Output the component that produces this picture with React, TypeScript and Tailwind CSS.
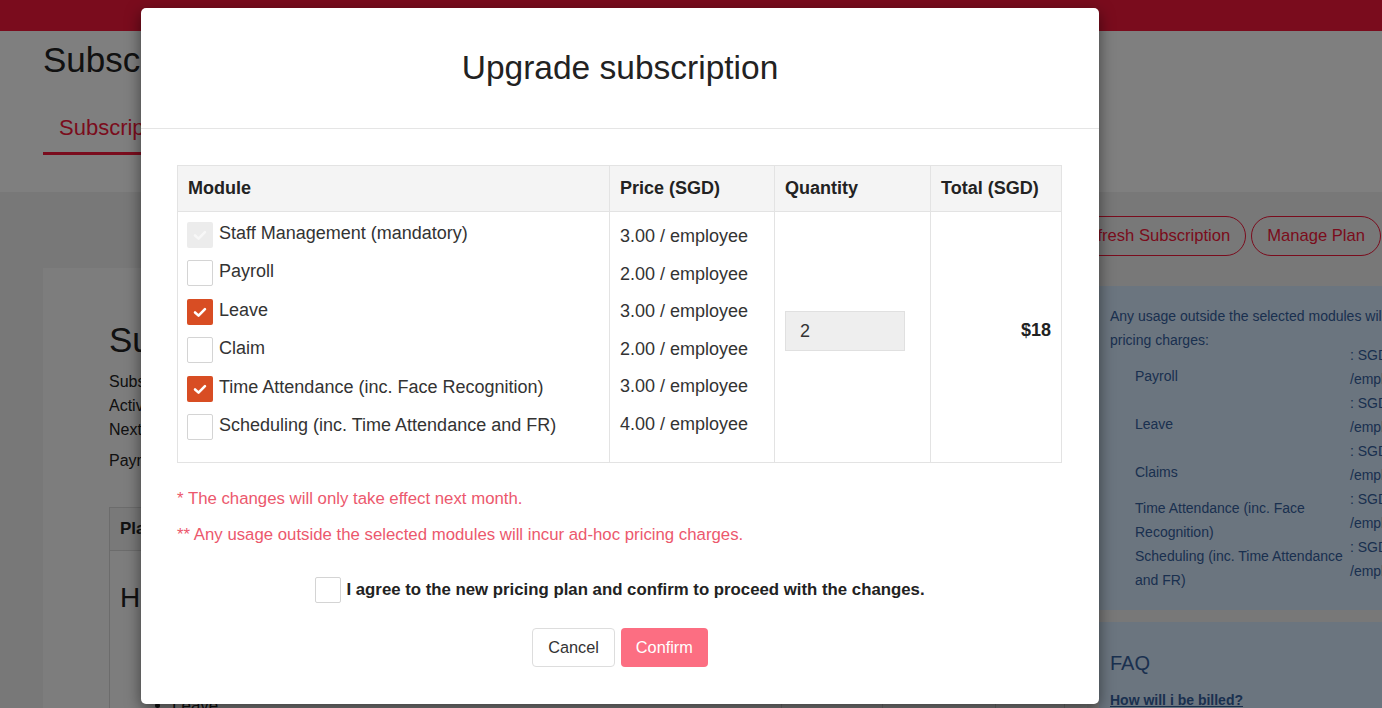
import React from 'react';

type BoxState = 'on' | 'off' | 'disabled';

const modules: { name: string; state: BoxState; price: string }[] = [
  { name: 'Staff Management (mandatory)', state: 'disabled', price: '3.00' },
  { name: 'Payroll', state: 'off', price: '2.00' },
  { name: 'Leave', state: 'on', price: '3.00' },
  { name: 'Claim', state: 'off', price: '2.00' },
  { name: 'Time Attendance (inc. Face Recognition)', state: 'on', price: '3.00' },
  { name: 'Scheduling (inc. Time Attendance and FR)', state: 'off', price: '4.00' },
];

const adHoc = [
  'Payroll',
  'Leave',
  'Claims',
  'Time Attendance (inc. Face Recognition)',
  'Scheduling (inc. Time Attendance and FR)',
];

const Checkbox: React.FC<{ state: BoxState }> = ({ state }) => {
  if (state === 'off') {
    return <span className="block w-[26px] h-[26px] shrink-0 rounded-[2px] border-[1.5px] border-[#d4d4d4] bg-white" />;
  }
  const on = state === 'on';
  return (
    <span
      className={
        on
          ? 'flex w-[26px] h-[26px] shrink-0 items-center justify-center rounded-[2px] bg-[#d84d23]'
          : 'flex w-[26px] h-[26px] shrink-0 items-center justify-center rounded-[2px] bg-[#ececec]'
      }
    >
      <svg width="18" height="18" viewBox="0 0 16 16" fill="none">
        <path
          d="M3.6 8.4 L6.7 11.2 L12.4 5.4"
          stroke={on ? '#ffffff' : '#f7f7f7'}
          strokeWidth="2.3"
          strokeLinecap="round"
          strokeLinejoin="round"
        />
      </svg>
    </span>
  );
};

// page sitting behind the dialog
const BackgroundPage = () => (
  <div className="w-[1382px] h-[708px] bg-[#f0f0f0] text-[#222]">
    <div className="h-[31px] bg-[#f5183a]" />

    {/* header */}
    <div className="h-[161px] bg-white px-[43px] pt-[9px]">
      <h1 className="text-[35px] leading-[40px]">Subscription</h1>
      <div className="mt-[27px] flex">
        <div className="border-b-[3px] border-[#f5183a] px-[16px] pt-[8px] pb-[11px] text-[22px] leading-[26px] text-[#f5183a]">
          Subscription
        </div>
      </div>
    </div>

    {/* actions */}
    <div className="flex justify-end gap-[5px] pt-[24px] pr-px">
      <button className="h-[40px] rounded-full border border-[#f5183a] px-[15px] text-[16.6px] text-[#f5183a]">
        Refresh Subscription
      </button>
      <button className="h-[40px] rounded-full border border-[#f5183a] px-[15px] text-[16.6px] text-[#f5183a]">
        Manage Plan
      </button>
    </div>

    <div className="mt-[12px] flex items-start pl-[43px]">
      {/* left card */}
      <div className="w-[1044px] h-[460px] shrink-0 bg-[#fbfbfb] pl-[66px] pt-[52px]">
        <h2 className="text-[35px] leading-[40px]">Subscription Details</h2>
        <div className="mt-[10px] text-[16px] leading-[24px]">
          <p>Subscription ID: SUB-000183</p>
          <p>Active since: 01 Mar 2023</p>
          <p>Next billing date: 01 Jul 2024</p>
          <p className="mt-[7px]">Payment method: Credit card</p>
        </div>
        <div className="mt-[34px] w-[956px] border border-[#d8d8d8]">
          <div className="grid grid-cols-[672px_101px_113px_1fr] h-[43px] bg-[#f3f3f3] border-b border-[#d8d8d8] text-[17px] font-bold">
            <div className="flex items-center px-[10px] border-r border-[#d8d8d8]">Plan</div>
            <div className="flex items-center px-[10px] border-r border-[#d8d8d8]">Price</div>
            <div className="flex items-center px-[10px] border-r border-[#d8d8d8]">Quantity</div>
            <div className="flex items-center px-[10px]">Total</div>
          </div>
          <div className="grid grid-cols-[672px_101px_113px_1fr] h-[200px]">
            <div className="border-r border-[#d8d8d8] px-[10px] pt-[30px]">
              <p className="text-[28px] leading-[34px]">HR Suite</p>
              <ul className="mt-[78px] list-disc pl-[52px] text-[17px]">
                <li>Leave</li>
              </ul>
            </div>
            <div className="border-r border-[#d8d8d8]" />
            <div className="border-r border-[#d8d8d8]" />
            <div />
          </div>
        </div>
      </div>

      {/* right column */}
      <div className="ml-[12px] w-[420px] shrink-0 text-[#34609f]">
        <div className="mt-[18px] h-[324px] bg-[#d7eafe] pl-[11px] pt-[18px] text-[14px] leading-[24px]">
          <p>Any usage outside the selected modules will incur ad-hoc</p>
          <p>pricing charges:</p>
          <div className="ml-[25px] -mt-[9px]">
            {adHoc.map((label) => (
              <div key={label} className="flex h-[48px] items-center">
                <div className="w-[215px] shrink-0 translate-y-[9px]">{label}</div>
                <div className="w-[80px] whitespace-nowrap">
                  <p>: SGD 2.00</p>
                  <p>/employee</p>
                </div>
              </div>
            ))}
          </div>
        </div>
        <div className="mt-[12px] h-[100px] bg-[#d7eafe] pl-[11px] pt-[27px]">
          <p className="text-[20px] leading-[28px]">FAQ</p>
          <p className="mt-[13px] text-[14px] leading-[20px] font-bold underline">How will i be billed?</p>
        </div>
      </div>
    </div>
  </div>
);

const UpgradeDialog = () => (
  <div className="absolute left-[141px] top-[8px] w-[958px] h-[696px] rounded-[5px] bg-white shadow-[0_5px_15px_rgba(0,0,0,0.5)] text-[#333]">
    <div className="flex h-[121px] items-center justify-center border-b border-[#e5e5e5]">
      <h3 className="text-[33.5px] leading-[40px] text-[#222]">Upgrade subscription</h3>
    </div>

    <div className="px-[36px] pt-[36px]">
      <div className="w-[885px] border border-[#e3e3e3]">
        <div className="grid grid-cols-[432px_165px_156px_1fr] h-[46px] bg-[#f4f4f4] border-b border-[#e3e3e3] text-[18px] font-bold text-[#222]">
          <div className="flex items-center pl-[10px] border-r border-[#e3e3e3]">Module</div>
          <div className="flex items-center pl-[10px] border-r border-[#e3e3e3]">Price (SGD)</div>
          <div className="flex items-center pl-[10px] border-r border-[#e3e3e3]">Quantity</div>
          <div className="flex items-center pl-[10px]">Total (SGD)</div>
        </div>
        <div className="grid grid-cols-[432px_165px_156px_1fr] h-[250px] text-[18px]">
          <div className="border-r border-[#e3e3e3] pl-[9px] pt-[10px]">
            {modules.map((m) => (
              <div key={m.name} className="flex h-[38.4px] items-start gap-[6px]">
                <Checkbox state={m.state} />
                <span className="leading-[22px]">{m.name}</span>
              </div>
            ))}
          </div>
          <div className="border-r border-[#e3e3e3] pl-[10px] pt-[6px]">
            {modules.map((m) => (
              <p key={m.name} className="leading-[37.6px]">{m.price} / employee</p>
            ))}
          </div>
          <div className="flex items-center border-r border-[#e3e3e3] pl-[10px] pb-[12px]">
            <div className="flex h-[40px] w-[120px] items-center border border-[#e0e0e0] bg-[#eeeeee] px-[14px]">2</div>
          </div>
          <div className="flex items-center justify-end pr-[10px] pb-[14px] font-bold text-[#222]">$18</div>
        </div>
      </div>

      <p className="mt-[24px] text-[16.8px] leading-[24px] text-[#ec586d]">* The changes will only take effect next month.</p>
      <p className="mt-[12px] text-[16.8px] leading-[24px] text-[#ec586d]">** Any usage outside the selected modules will incur ad-hoc pricing charges.</p>

      <div className="mt-[30px] flex items-center justify-center gap-[5px]">
        <Checkbox state="off" />
        <span className="text-[16.8px] font-bold text-[#222]">
          I agree to the new pricing plan and confirm to proceed with the changes.
        </span>
      </div>

      <div className="mt-[25px] flex justify-center gap-[6px]">
        <button className="h-[39px] rounded-[4px] border border-[#dddddd] bg-white px-[15px] text-[16.3px] text-[#333]">
          Cancel
        </button>
        <button className="h-[39px] rounded-[4px] bg-[#fc6e82] px-[15px] text-[16.3px] text-white">
          Confirm
        </button>
      </div>
    </div>
  </div>
);

export default function App() {
  return (
    <div className="relative w-[1382px] h-[708px] overflow-hidden [font-family:'Liberation_Sans',Arial,sans-serif]">
      <BackgroundPage />
      <div className="absolute inset-0 bg-black/50" />
      <UpgradeDialog />
    </div>
  );
}
